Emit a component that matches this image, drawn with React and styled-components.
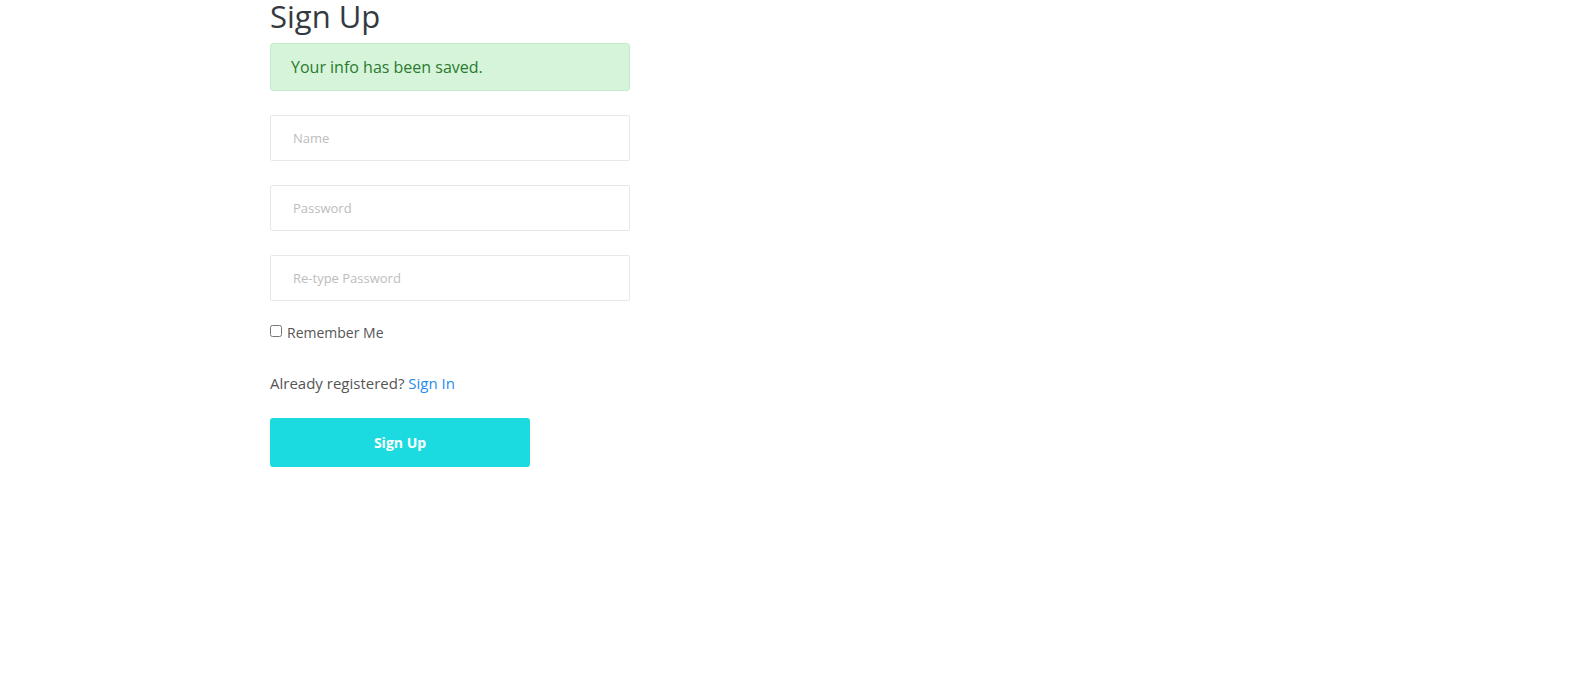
import React from 'react';
import styled, { createGlobalStyle } from 'styled-components';

const GlobalStyle = createGlobalStyle`
  body {
    margin: 0;
    background: #fff;
    font-family: "Open Sans", "Liberation Sans", sans-serif;
  }
`;

const Page = styled.div`
  padding-left: 270px;
`;

const Form = styled.form`
  width: 360px;
  display: flex;
  flex-direction: column;
`;

const Title = styled.h1`
  margin: 0 0 11px;
  padding-top: 1px;
  font-size: 31px;
  line-height: 31px;
  font-weight: 500;
  color: #343a40;
`;

const Alert = styled.div`
  box-sizing: border-box;
  height: 48px;
  padding: 0 20px;
  display: flex;
  align-items: center;
  background: #d6f4d9;
  border: 1px solid #c4ecc8;
  border-radius: 3px;
  color: #2a7a2f;
  font-size: 16px;
  margin-bottom: 24px;
`;

const Input = styled.input`
  box-sizing: border-box;
  height: 46px;
  width: 100%;
  padding: 0 22px;
  border: 1px solid #e6e8ea;
  border-radius: 2px;
  font-family: inherit;
  font-size: 13px;
  color: #555;
  margin-bottom: 24px;
  outline: none;

  &::placeholder {
    color: #bdbdbd;
  }
`;

const CheckRow = styled.label`
  display: flex;
  align-items: center;
  gap: 5px;
  font-size: 14px;
  color: #555;
  margin-top: -3px;
  height: 20px;
`;

const Check = styled.input`
  margin: 0;
  width: 12px;
  height: 12px;
  position: relative;
  top: -1px;
  accent-color: #888;
`;

const Already = styled.p`
  margin: 30px 0 0;
  font-size: 15px;
  line-height: 22px;
  color: #555;
`;

const Link = styled.a`
  color: #1f8bf0;
  text-decoration: none;
`;

const Button = styled.button`
  margin-top: 24px;
  width: 260px;
  height: 49px;
  border: none;
  border-radius: 3px;
  background: #1cdbe0;
  color: #fff;
  font-family: inherit;
  font-size: 14px;
  font-weight: 700;
  cursor: pointer;
`;

export default function App() {
  return (
    <Page>
      <GlobalStyle />
      <Form onSubmit={e => e.preventDefault()}>
        <Title>Sign Up</Title>
        <Alert>Your info has been saved.</Alert>
        <Input type="text" placeholder="Name" />
        <Input type="password" placeholder="Password" />
        <Input type="password" placeholder="Re-type Password" />
        <CheckRow>
          <Check type="checkbox" />
          Remember Me
        </CheckRow>
        <Already>
          Already registered? <Link href="#">Sign In</Link>
        </Already>
        <Button type="submit">Sign Up</Button>
      </Form>
    </Page>
  );
}
